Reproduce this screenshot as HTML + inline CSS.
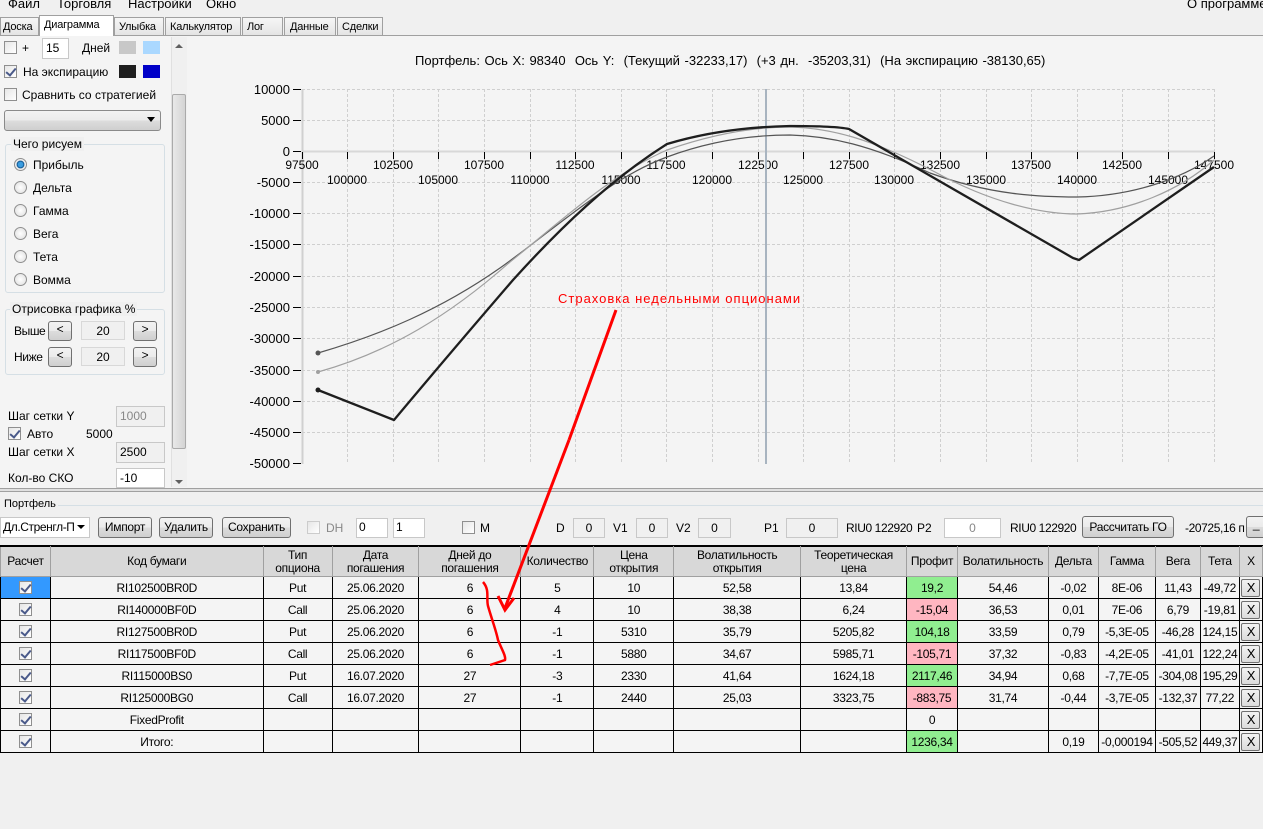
<!DOCTYPE html>
<html><head><meta charset="utf-8">
<style>
*{box-sizing:border-box}
body{margin:0;width:1263px;height:829px;background:#f0f0f0;font-family:"Liberation Sans",sans-serif;font-size:12px;color:#000;position:relative;overflow:hidden}
.a{position:absolute;white-space:nowrap}
.tab{position:absolute;top:17px;height:18px;border:1px solid #a0a0a0;border-bottom:none;background:linear-gradient(#f6f6f6,#e4e4e4);padding:3px 2px 0;font-size:11px;letter-spacing:-0.2px;overflow:hidden}
.cb{position:absolute;width:13px;height:13px;border:1px solid #8f8f8f;background:linear-gradient(135deg,#e6e6e6,#fff)}
.chk::after{content:"";position:absolute;left:3px;top:0px;width:4px;height:8px;border:solid #4a5a8a;border-width:0 2px 2px 0;transform:rotate(40deg)}
.btn{position:absolute;border:1px solid #707070;border-radius:3px;background:linear-gradient(#f2f2f2,#ebebeb 50%,#dddddd 50%,#cfcfcf);text-align:center;font-size:12px;letter-spacing:-0.3px}
.inp{position:absolute;border:1px solid #c8c8c8;background:#fff;font-size:12px;padding:2px 3px}
.ro{background:#f0f0f0;text-align:center}
.rad{position:absolute;width:13px;height:13px;border-radius:50%;border:1px solid #8f8f8f;background:radial-gradient(#fff,#ddd)}
.grp{position:absolute;border:1px solid #d5dfe5;border-radius:3px}
.gl{position:absolute;background:#f0f0f0;padding:0 2px}
.tb{letter-spacing:-0.4px}
table{position:absolute;left:0;top:546px;border-collapse:collapse;table-layout:fixed;font-size:12px;letter-spacing:-0.3px}
td{border:1px solid #000;height:22px;text-align:center;background:#f4f4f4;padding:0;line-height:12px}
th{border:1px solid #a0a0a0;border-top:1px solid #000;height:30px;font-weight:normal;background:#d8d8d8;line-height:13px;padding:0;font-size:12px}
.g{background:#90ee90}.p{background:#ffb6c1}
.x{display:block;margin:0 auto;width:19px;height:18px;border:1px solid #707070;border-radius:2px;background:linear-gradient(#f2f2f2,#dcdcdc);line-height:16px;font-size:13px}
.tc{display:inline-block;width:13px;height:13px;border:1px solid #8f8f8f;background:linear-gradient(135deg,#e6e6e6,#fff);position:relative;vertical-align:middle}
.tc::after{content:"";position:absolute;left:3px;top:0;width:4px;height:8px;border:solid #4a5a8a;border-width:0 2px 2px 0;transform:rotate(40deg)}
</style></head><body>
<div class="a" style="left:0;top:0;width:1263px;height:14px;background:#f0f0f0"></div>
<div class="a" style="left:8px;top:-4px;font-size:13px">Файл</div>
<div class="a" style="left:57px;top:-4px;font-size:13px">Торговля</div>
<div class="a" style="left:128px;top:-4px;font-size:13px">Настройки</div>
<div class="a" style="left:206px;top:-4px;font-size:13px">Окно</div>
<div class="a" style="left:1187px;top:-4px;font-size:13px">О программе</div>
<div class="a" style="left:0;top:35px;width:1263px;height:1px;background:#a0a0a0"></div>
<div class="tab" style="left:0;width:39px">Доска</div>
<div class="tab" style="left:39px;top:15px;height:21px;width:75px;background:#fff;padding-left:4px">Диаграмма</div>
<div class="tab" style="left:114px;width:50px;padding-left:4px">Улыбка</div>
<div class="tab" style="left:165px;width:76px;padding-left:4px">Калькулятор</div>
<div class="tab" style="left:242px;width:41px;padding-left:4px">Лог</div>
<div class="tab" style="left:284px;width:52px;padding-left:5px">Данные</div>
<div class="tab" style="left:337px;width:46px;padding-left:4px">Сделки</div>
<div class="a" style="left:0;top:36px;width:1263px;height:453px;background:#f4f4f4"></div>
<div class="cb" style="left:4px;top:41px"></div><div class="a" style="left:22px;top:41px">+</div>
<div class="inp" style="left:42px;top:38px;width:27px;height:21px">15</div>
<div class="a" style="left:82px;top:41px">Дней</div>
<div class="a" style="left:119px;top:41px;width:17px;height:13px;background:#c8c8c8"></div>
<div class="a" style="left:143px;top:41px;width:17px;height:13px;background:#aad8ff"></div>
<div class="cb chk" style="left:4px;top:65px"></div><div class="a" style="left:23px;top:65px">На экспирацию</div>
<div class="a" style="left:119px;top:65px;width:17px;height:13px;background:#1e1e1e"></div>
<div class="a" style="left:143px;top:65px;width:17px;height:13px;background:#0000c8"></div>
<div class="cb" style="left:4px;top:88px"></div><div class="a" style="left:22px;top:88px">Сравнить со стратегией</div>
<div class="btn" style="left:4px;top:110px;width:157px;height:21px;border-color:#8a8a8a"><span style="position:absolute;right:5px;top:6px;border:4px solid transparent;border-top:5px solid #000"></span></div>
<div class="grp" style="left:5px;top:144px;width:160px;height:149px"></div><div class="gl" style="left:11px;top:137px">Чего рисуем</div>
<div class="rad" style="left:14px;top:158px;background:radial-gradient(#3b9de0 30%,#0a4f8a 45%,#eee 55%)"></div><div class="a" style="left:33px;top:158px">Прибыль</div>
<div class="rad" style="left:14px;top:181px"></div><div class="a" style="left:33px;top:181px">Дельта</div>
<div class="rad" style="left:14px;top:204px"></div><div class="a" style="left:33px;top:204px">Гамма</div>
<div class="rad" style="left:14px;top:227px"></div><div class="a" style="left:33px;top:227px">Вега</div>
<div class="rad" style="left:14px;top:250px"></div><div class="a" style="left:33px;top:250px">Тета</div>
<div class="rad" style="left:14px;top:273px"></div><div class="a" style="left:33px;top:273px">Вомма</div>
<div class="grp" style="left:5px;top:309px;width:160px;height:66px"></div><div class="gl" style="left:10px;top:302px">Отрисовка графика %</div>
<div class="a" style="left:14px;top:324px;letter-spacing:-0.4px">Выше</div>
<div class="btn" style="left:48px;top:321px;width:24px;height:20px">&lt;</div>
<div class="inp ro" style="left:81px;top:321px;width:44px;height:19px;border-color:#d8d8d8">20</div>
<div class="btn" style="left:133px;top:321px;width:24px;height:20px">&gt;</div>
<div class="a" style="left:14px;top:350px;letter-spacing:-0.4px">Ниже</div>
<div class="btn" style="left:48px;top:347px;width:24px;height:20px">&lt;</div>
<div class="inp ro" style="left:81px;top:347px;width:44px;height:19px;border-color:#d8d8d8">20</div>
<div class="btn" style="left:133px;top:347px;width:24px;height:20px">&gt;</div>
<div class="a" style="left:8px;top:409px">Шаг сетки Y</div>
<div class="inp" style="left:116px;top:406px;width:49px;height:21px;background:#f0f0f0;color:#888">1000</div>
<div class="cb chk" style="left:8px;top:427px"></div><div class="a" style="left:27px;top:427px">Авто</div>
<div class="a" style="left:86px;top:427px">5000</div>
<div class="a" style="left:8px;top:445px">Шаг сетки X</div>
<div class="inp" style="left:116px;top:442px;width:49px;height:21px;background:#f0f0f0">2500</div>
<div class="a" style="left:8px;top:471px">Кол-во СКО</div>
<div class="inp" style="left:116px;top:468px;width:49px;height:20px">-10</div>
<div class="a" style="left:171px;top:37px;width:16px;height:450px;background:#f0f0f0;border-left:1px solid #e0e0e0"></div>
<div class="a" style="left:175px;top:44px;border:4px solid transparent;border-bottom:4px solid #606060;border-top:0"></div>
<div class="a" style="left:172px;top:94px;width:14px;height:355px;border:1px solid #aaa;border-radius:2px;background:linear-gradient(90deg,#e8e8e8,#d4d4d4)"></div>
<div class="a" style="left:175px;top:480px;border:4px solid transparent;border-top:4px solid #606060;border-bottom:0"></div>
<div class="a" style="left:415px;top:53px;font-size:13px;word-spacing:1px">Портфель: Ось X: 98340&nbsp; Ось Y: &nbsp;(Текущий -32233,17) &nbsp;(+3 дн. &nbsp;-35203,31) &nbsp;(На экспирацию -38130,65)</div>
<svg class="a" style="left:0;top:0" width="1263" height="490" font-family="Liberation Sans" font-size="12">
<g stroke="#cfcfcf" stroke-dasharray="3,2" stroke-width="1">
<line x1="302" y1="89.5" x2="1214" y2="89.5"/><line x1="302" y1="120.5" x2="1214" y2="120.5"/><line x1="302" y1="182.5" x2="1214" y2="182.5"/><line x1="302" y1="213.5" x2="1214" y2="213.5"/><line x1="302" y1="244.5" x2="1214" y2="244.5"/><line x1="302" y1="276.5" x2="1214" y2="276.5"/><line x1="302" y1="307.5" x2="1214" y2="307.5"/><line x1="302" y1="338.5" x2="1214" y2="338.5"/><line x1="302" y1="370.5" x2="1214" y2="370.5"/><line x1="302" y1="401.5" x2="1214" y2="401.5"/><line x1="302" y1="432.5" x2="1214" y2="432.5"/>
<line x1="347.5" y1="89" x2="347.5" y2="464"/><line x1="393.5" y1="89" x2="393.5" y2="464"/><line x1="438.5" y1="89" x2="438.5" y2="464"/><line x1="484.5" y1="89" x2="484.5" y2="464"/><line x1="530.5" y1="89" x2="530.5" y2="464"/><line x1="575.5" y1="89" x2="575.5" y2="464"/><line x1="621.5" y1="89" x2="621.5" y2="464"/><line x1="666.5" y1="89" x2="666.5" y2="464"/><line x1="712.5" y1="89" x2="712.5" y2="464"/><line x1="758.5" y1="89" x2="758.5" y2="464"/><line x1="803.5" y1="89" x2="803.5" y2="464"/><line x1="849.5" y1="89" x2="849.5" y2="464"/><line x1="894.5" y1="89" x2="894.5" y2="464"/><line x1="940.5" y1="89" x2="940.5" y2="464"/><line x1="986.5" y1="89" x2="986.5" y2="464"/><line x1="1031.5" y1="89" x2="1031.5" y2="464"/><line x1="1077.5" y1="89" x2="1077.5" y2="464"/><line x1="1122.5" y1="89" x2="1122.5" y2="464"/><line x1="1168.5" y1="89" x2="1168.5" y2="464"/><line x1="1214.5" y1="89" x2="1214.5" y2="464"/>
</g>
<line x1="302.5" y1="89" x2="302.5" y2="464" stroke="#d0d0d0" stroke-width="2"/>
<line x1="302" y1="151.5" x2="1214" y2="151.5" stroke="#d8d8d8" stroke-width="2"/>
<g stroke="#000">
<line x1="293" y1="89.5" x2="301" y2="89.5"/><line x1="293" y1="120.5" x2="301" y2="120.5"/><line x1="293" y1="151.5" x2="301" y2="151.5"/><line x1="293" y1="182.5" x2="301" y2="182.5"/><line x1="293" y1="213.5" x2="301" y2="213.5"/><line x1="293" y1="244.5" x2="301" y2="244.5"/><line x1="293" y1="276.5" x2="301" y2="276.5"/><line x1="293" y1="307.5" x2="301" y2="307.5"/><line x1="293" y1="338.5" x2="301" y2="338.5"/><line x1="293" y1="370.5" x2="301" y2="370.5"/><line x1="293" y1="401.5" x2="301" y2="401.5"/><line x1="293" y1="432.5" x2="301" y2="432.5"/><line x1="293" y1="463.5" x2="301" y2="463.5"/>
<line x1="302.5" y1="152" x2="302.5" y2="159"/><line x1="347.5" y1="152" x2="347.5" y2="159"/><line x1="393.5" y1="152" x2="393.5" y2="159"/><line x1="438.5" y1="152" x2="438.5" y2="159"/><line x1="484.5" y1="152" x2="484.5" y2="159"/><line x1="530.5" y1="152" x2="530.5" y2="159"/><line x1="575.5" y1="152" x2="575.5" y2="159"/><line x1="621.5" y1="152" x2="621.5" y2="159"/><line x1="666.5" y1="152" x2="666.5" y2="159"/><line x1="712.5" y1="152" x2="712.5" y2="159"/><line x1="758.5" y1="152" x2="758.5" y2="159"/><line x1="803.5" y1="152" x2="803.5" y2="159"/><line x1="849.5" y1="152" x2="849.5" y2="159"/><line x1="894.5" y1="152" x2="894.5" y2="159"/><line x1="940.5" y1="152" x2="940.5" y2="159"/><line x1="986.5" y1="152" x2="986.5" y2="159"/><line x1="1031.5" y1="152" x2="1031.5" y2="159"/><line x1="1077.5" y1="152" x2="1077.5" y2="159"/><line x1="1122.5" y1="152" x2="1122.5" y2="159"/><line x1="1168.5" y1="152" x2="1168.5" y2="159"/><line x1="1214.5" y1="152" x2="1214.5" y2="159"/>
</g>
<g text-anchor="end" font-size="13">
<text x="290" y="94">10000</text><text x="290" y="125">5000</text><text x="290" y="156">0</text><text x="290" y="187">-5000</text><text x="290" y="218">-10000</text><text x="290" y="249">-15000</text><text x="290" y="281">-20000</text><text x="290" y="312">-25000</text><text x="290" y="343">-30000</text><text x="290" y="375">-35000</text><text x="290" y="406">-40000</text><text x="290" y="437">-45000</text><text x="290" y="468">-50000</text>
</g>
<g text-anchor="middle">
<text x="302" y="169">97500</text><text x="393" y="169">102500</text><text x="484" y="169">107500</text><text x="575" y="169">112500</text><text x="666" y="169">117500</text><text x="758" y="169">122500</text><text x="849" y="169">127500</text><text x="940" y="169">132500</text><text x="1031" y="169">137500</text><text x="1122" y="169">142500</text><text x="1214" y="169">147500</text>
<text x="347" y="184">100000</text><text x="438" y="184">105000</text><text x="530" y="184">110000</text><text x="621" y="184">115000</text><text x="712" y="184">120000</text><text x="803" y="184">125000</text><text x="894" y="184">130000</text><text x="986" y="184">135000</text><text x="1077" y="184">140000</text><text x="1168" y="184">145000</text>
</g>
<line x1="766" y1="89" x2="766" y2="464" stroke="#a8b4c0" stroke-width="2"/>
<path d="M318,353 C380,335 440,310 500,268 C560,225 610,178 667,157 C710,141 750,135 790,135 C830,136 870,145 930,173 C990,195 1040,197 1077,197 C1130,196 1180,180 1214,156" fill="none" stroke="#555" stroke-width="1.2"/>
<path d="M318,372 C390,352 450,315 510,262 C560,222 610,175 667,150 C710,135 750,127 790,127 C830,128 870,138 935,172 C990,202 1040,214 1077,214 C1130,212 1180,190 1214,160" fill="none" stroke="#a0a0a0" stroke-width="1.2"/>
<path d="M318,390 L394,420 C440,365 470,330 513,280 C560,228 610,180 667,144 C700,134 740,127 790,126 C820,126 840,127 849,129 L1073,258 L1079,260 L1214,167" fill="none" stroke="#1e1e1e" stroke-width="2.3" stroke-linejoin="round"/>
<circle cx="318" cy="353" r="2.5" fill="#555"/><circle cx="318" cy="372" r="2" fill="#a0a0a0"/><circle cx="318" cy="390" r="2.5" fill="#1e1e1e"/>
<text x="558" y="303" fill="#ff0000" font-size="13" letter-spacing="1">Страховка недельными опционами</text>
<line x1="616" y1="310" x2="569" y2="440" stroke="#ff0000" stroke-width="3"/>
</svg>
<div class="a" style="left:0;top:488px;width:1263px;height:4px;background:#e0e0e0;border-top:1px solid #a0a0a0;border-bottom:1px solid #a0a0a0"></div>
<div class="a" style="left:4px;top:498px;font-size:11px">Портфель</div>
<div class="a" style="left:58px;top:505px;width:1205px;height:1px;background:#d5dfe5"></div>
<div class="inp tb" style="left:0;top:517px;width:90px;height:21px;padding-left:2px">Дл.Стренгл-П<span style="position:absolute;right:4px;top:7px;border:4px solid transparent;border-top:4px solid #000"></span></div>
<div class="btn" style="left:98px;top:517px;width:54px;height:21px;padding-top:2px">Импорт</div>
<div class="btn" style="left:159px;top:517px;width:54px;height:21px;padding-top:2px">Удалить</div>
<div class="btn" style="left:222px;top:517px;width:69px;height:21px;padding-top:2px">Сохранить</div>
<div class="cb" style="left:307px;top:521px;border-color:#ccc"></div><div class="a" style="left:326px;top:521px;color:#888">DH</div>
<div class="inp" style="left:356px;top:518px;width:32px;height:20px;padding:1px 2px">0</div>
<div class="inp" style="left:393px;top:518px;width:32px;height:20px;padding:1px 2px">1</div>
<div class="cb" style="left:462px;top:521px"></div><div class="a" style="left:480px;top:521px">M</div>
<div class="a" style="left:556px;top:521px">D</div><div class="inp ro" style="left:573px;top:518px;width:32px;height:20px">0</div>
<div class="a" style="left:613px;top:521px">V1</div><div class="inp ro" style="left:636px;top:518px;width:32px;height:20px">0</div>
<div class="a" style="left:676px;top:521px">V2</div><div class="inp ro" style="left:698px;top:518px;width:33px;height:20px">0</div>
<div class="a" style="left:764px;top:521px">P1</div><div class="inp ro" style="left:786px;top:518px;width:52px;height:20px">0</div>
<div class="a tb" style="left:846px;top:521px">RIU0 122920</div>
<div class="a" style="left:917px;top:521px">P2</div><div class="inp" style="left:944px;top:518px;width:57px;height:20px;text-align:center;color:#888">0</div>
<div class="a tb" style="left:1010px;top:521px">RIU0 122920</div>
<div class="btn" style="left:1082px;top:516px;width:92px;height:22px;padding-top:3px">Рассчитать ГО</div>
<div class="a tb" style="left:1185px;top:521px">-20725,16 п</div>
<div class="btn" style="left:1246px;top:516px;width:20px;height:22px">_</div>
<div class="a" style="left:0;top:545px;width:1263px;height:1px;background:#000"></div>
<table>
<colgroup><col style="width:50px"><col style="width:213px"><col style="width:69px"><col style="width:87px"><col style="width:102px"><col style="width:73px"><col style="width:80px"><col style="width:127px"><col style="width:106px"><col style="width:51px"><col style="width:91px"><col style="width:50px"><col style="width:57px"><col style="width:45px"><col style="width:39px"><col style="width:23px"></colgroup>
<tr><th>Расчет</th><th>Код бумаги</th><th>Тип<br>опциона</th><th>Дата<br>погашения</th><th>Дней до<br>погашения</th><th>Количество</th><th>Цена<br>открытия</th><th>Волатильность<br>открытия</th><th>Теоретическая<br>цена</th><th>Профит</th><th>Волатильность</th><th>Дельта</th><th>Гамма</th><th>Вега</th><th>Тета</th><th>X</th></tr>
<tr><td style="background:#3399ff"><span class="tc"></span></td><td>RI102500BR0D</td><td>Put</td><td>25.06.2020</td><td>6</td><td>5</td><td>10</td><td>52,58</td><td>13,84</td><td class="g">19,2</td><td>54,46</td><td>-0,02</td><td>8E-06</td><td>11,43</td><td>-49,72</td><td><span class="x">X</span></td></tr>
<tr><td><span class="tc"></span></td><td>RI140000BF0D</td><td>Call</td><td>25.06.2020</td><td>6</td><td>4</td><td>10</td><td>38,38</td><td>6,24</td><td class="p">-15,04</td><td>36,53</td><td>0,01</td><td>7E-06</td><td>6,79</td><td>-19,81</td><td><span class="x">X</span></td></tr>
<tr><td><span class="tc"></span></td><td>RI127500BR0D</td><td>Put</td><td>25.06.2020</td><td>6</td><td>-1</td><td>5310</td><td>35,79</td><td>5205,82</td><td class="g">104,18</td><td>33,59</td><td>0,79</td><td>-5,3E-05</td><td>-46,28</td><td>124,15</td><td><span class="x">X</span></td></tr>
<tr><td><span class="tc"></span></td><td>RI117500BF0D</td><td>Call</td><td>25.06.2020</td><td>6</td><td>-1</td><td>5880</td><td>34,67</td><td>5985,71</td><td class="p">-105,71</td><td>37,32</td><td>-0,83</td><td>-4,2E-05</td><td>-41,01</td><td>122,24</td><td><span class="x">X</span></td></tr>
<tr><td><span class="tc"></span></td><td>RI115000BS0</td><td>Put</td><td>16.07.2020</td><td>27</td><td>-3</td><td>2330</td><td>41,64</td><td>1624,18</td><td class="g">2117,46</td><td>34,94</td><td>0,68</td><td>-7,7E-05</td><td>-304,08</td><td>195,29</td><td><span class="x">X</span></td></tr>
<tr><td><span class="tc"></span></td><td>RI125000BG0</td><td>Call</td><td>16.07.2020</td><td>27</td><td>-1</td><td>2440</td><td>25,03</td><td>3323,75</td><td class="p">-883,75</td><td>31,74</td><td>-0,44</td><td>-3,7E-05</td><td>-132,37</td><td>77,22</td><td><span class="x">X</span></td></tr>
<tr><td><span class="tc"></span></td><td>FixedProfit</td><td></td><td></td><td></td><td></td><td></td><td></td><td></td><td>0</td><td></td><td></td><td></td><td></td><td></td><td><span class="x">X</span></td></tr>
<tr><td><span class="tc"></span></td><td>Итого:</td><td></td><td></td><td></td><td></td><td></td><td></td><td></td><td class="g">1236,34</td><td></td><td>0,19</td><td>-0,000194</td><td>-505,52</td><td>449,37</td><td><span class="x">X</span></td></tr>
</table>
<svg class="a" style="left:0;top:0" width="1263" height="829">
<path d="M569,440 L505,608" stroke="#ff0000" stroke-width="3" fill="none"/>
<path d="M498,596 L505,610 L514,598" stroke="#ff0000" stroke-width="3" fill="none"/>
<path d="M483,582 C490,590 486,598 488,606 C492,620 496,630 498,640 C502,650 506,656 505,660 L490,665" stroke="#ff0000" stroke-width="2.5" fill="none"/>
</svg>
</body></html>
